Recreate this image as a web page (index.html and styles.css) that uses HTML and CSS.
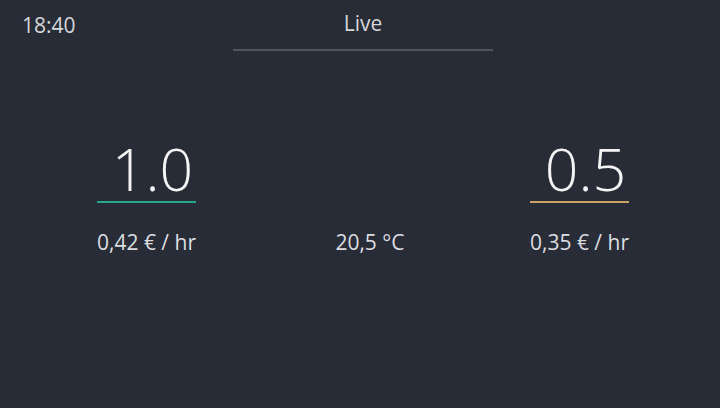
FILE: index.html
```html
<!DOCTYPE html>
<html lang="en">
<head>
  <meta charset="UTF-8" />
  <meta name="viewport" content="width=device-width, initial-scale=1.0" />
  <title>Live</title>
  <link rel="stylesheet" href="styles.css">
</head>
<body>
  <div class="screen">
    <div class="header">
      <div class="clock">18:40</div>
      <div class="tab">Live</div>
      <div></div>
    </div>

    <div class="stats">
      <div class="meter">
        <div class="value">1.0</div>
        <div class="bar bar-teal"></div>
        <div class="price">0,42 € / hr</div>
      </div>

      <div class="temp">20,5 °C</div>

      <div class="meter">
        <div class="value">0.5</div>
        <div class="bar bar-gold"></div>
        <div class="price">0,35 € / hr</div>
      </div>
    </div>
  </div>
</body>
</html>
```

FILE: styles.css
```css
body {
  margin: 0;
  background: #282c36;
  font-family: "Open Sans", "Noto Sans", sans-serif;
  color: #e4e5e7;
}
.screen {
  width: 720px;
  height: 408px;
}
.header {
  display: grid;
  grid-template-columns: 1fr 260px 1fr;
  align-items: start;
  padding: 13px 16px 0 22px;
}
.clock {
  font-size: 21px;
  line-height: 1;
  margin-top: 2px;
  color: #d6d7da;
}
.tab {
  text-align: center;
  font-size: 21px;
  line-height: 1;
  padding-bottom: 15px;
  border-bottom: 2px solid #52555d;
  color: #d6d7da;
}
.stats {
  display: flex;
  justify-content: space-between;
  align-items: flex-start;
  padding: 0 91px 0 97px;
  margin-top: 88px;
}
.meter {
  display: flex;
  flex-direction: column;
  align-items: center;
}
.value {
  font-size: 59px;
  font-weight: 300;
  line-height: 1;
  padding-left: 12px;
  color: #f4f4f5;
}
.bar {
  align-self: stretch;
  height: 2px;
  margin-top: 3px;
}
.bar-teal {
  background: #26a88b;
}
.bar-gold {
  background: #c9a466;
}
.price,
.temp {
  font-size: 21px;
  line-height: 1;
  margin-top: 29px;
  color: #dcdde0;
}
.temp {
  margin-top: 93px;
  margin-left: 14px;
}
```
